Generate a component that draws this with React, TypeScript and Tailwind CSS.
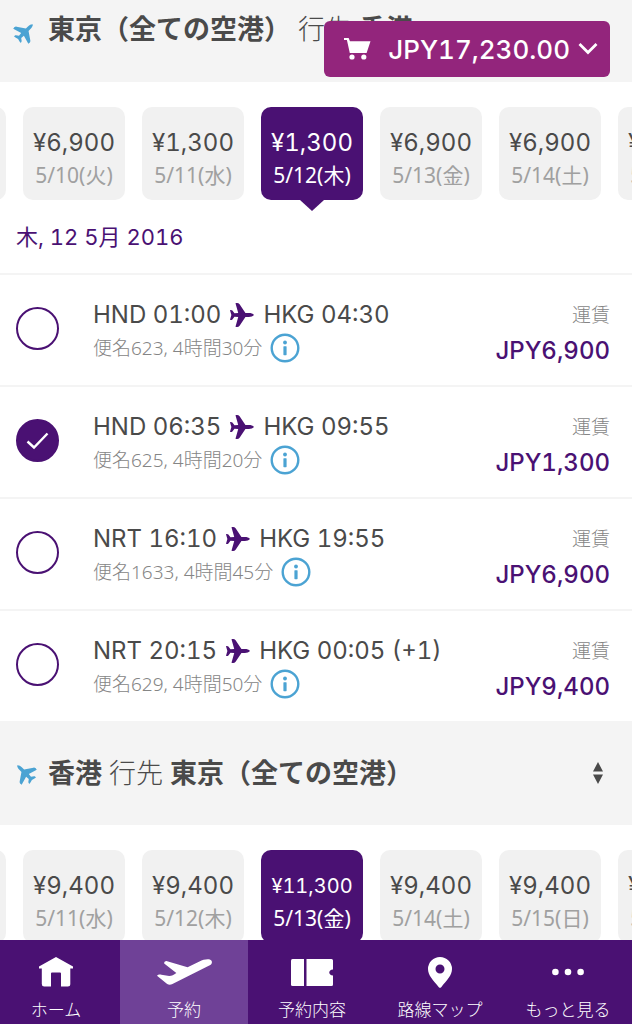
import React, { useState } from 'react';

const PRICE_FONT = "font-[Inter,'Noto_Sans_CJK_JP',sans-serif] tabular-nums";
const TEXT_FONT = "font-['Noto_Sans','Noto_Sans_CJK_JP',sans-serif]";

interface Fare {
  price: string;
  date: string;
}

interface Flight {
  id: string;
  from: string;
  to: string;
  detail: string;
  fare: string;
}

const OUTBOUND_FARES: Fare[] = [
  { price: '¥6,900', date: '5/9(月)' },
  { price: '¥6,900', date: '5/10(火)' },
  { price: '¥1,300', date: '5/11(水)' },
  { price: '¥1,300', date: '5/12(木)' },
  { price: '¥6,900', date: '5/13(金)' },
  { price: '¥6,900', date: '5/14(土)' },
  { price: '¥6,900', date: '5/15(日)' },
];

const RETURN_FARES: Fare[] = [
  { price: '¥9,400', date: '5/10(火)' },
  { price: '¥9,400', date: '5/11(水)' },
  { price: '¥9,400', date: '5/12(木)' },
  { price: '¥11,300', date: '5/13(金)' },
  { price: '¥9,400', date: '5/14(土)' },
  { price: '¥9,400', date: '5/15(日)' },
  { price: '¥9,400', date: '5/16(月)' },
];

const FLIGHTS: Flight[] = [
  { id: '623', from: 'HND 01:00', to: 'HKG 04:30', detail: '便名623, 4時間30分', fare: 'JPY6,900' },
  { id: '625', from: 'HND 06:35', to: 'HKG 09:55', detail: '便名625, 4時間20分', fare: 'JPY1,300' },
  { id: '1633', from: 'NRT 16:10', to: 'HKG 19:55', detail: '便名1633, 4時間45分', fare: 'JPY6,900' },
  { id: '629', from: 'NRT 20:15', to: 'HKG 00:05 (+1)', detail: '便名629, 4時間50分', fare: 'JPY9,400' },
];

// Plane pointing right, rotated by the caller
const Plane = ({ className }: { className: string }) => (
  <svg viewBox="0 0 70 70" className={className} fill="currentColor" aria-hidden="true">
    <path d="M70 35 C67 31 61 29.5 55 29.5 L45 29 L28 4 C25 0 21 -1 16 1 L24 29 L13 30 L7 22 C5 20 2 20 0 21 L4 35 L0 49 C2 50 5 50 7 48 L13 40 L24 41 L16 69 C21 71 25 70 28 66 L45 41 L55 40.5 C61 40.5 67 39 70 35 Z" />
  </svg>
);

const InfoIcon = () => (
  <svg viewBox="0 0 30 30" className="h-[30px] w-[30px]" aria-hidden="true">
    <circle cx="15" cy="15" r="13.3" fill="none" stroke="#4ba3d3" strokeWidth="2.4" />
    <circle cx="15" cy="9.5" r="1.9" fill="#4ba3d3" />
    <rect x="13.4" y="13.2" width="3.2" height="9" rx="0.6" fill="#4ba3d3" />
  </svg>
);

const CartIcon = () => (
  <svg viewBox="0 0 27 22" className="h-[22px] w-[27px]" fill="currentColor" aria-hidden="true">
    <path d="M0 0 H4.6 L6 3.2 H26.5 L22.6 15 H5.8 L2.9 2 H0 Z" />
    <circle cx="8" cy="19" r="2.6" />
    <circle cx="19.8" cy="19" r="2.6" />
  </svg>
);

const NAV_ITEMS = [
  {
    label: 'ホーム',
    icon: (
      <svg viewBox="0 0 34 30" className="h-[30px] w-[34px]" fill="currentColor" aria-hidden="true">
        <path d="M17 0 L34 9.5 V11.5 H31.3 V27 Q31.3 29.5 28.8 29.5 H22 V16.5 Q22 15.5 21 15.5 H13 Q12 15.5 12 16.5 V29.5 H5.2 Q2.8 29.5 2.8 27 V11.5 H0 V9.5 Z" />
      </svg>
    ),
  },
  {
    label: '予約',
    icon: (
      <svg viewBox="0 0 162 76" className="h-[26px] w-[55px]" fill="currentColor" aria-hidden="true">
        <path d="M160 4 C164 9 161 16 154 19 L44 74 C40 76 34 76 30 73 L0 49 C2 46 8 45 13 46 L36 50 C44 50 49 46 57 41 L22 14 C19 10 24 5 30 6 L90 24 L125 7 C138 0 155 -2 160 4 Z" />
      </svg>
    ),
  },
  {
    label: '予約内容',
    icon: (
      <svg viewBox="0 0 42 27" className="h-[27px] w-[42px]" fill="currentColor" aria-hidden="true">
        <path d="M1.5 0 H13 V27 H1.5 Q0 27 0 25.5 V1.5 Q0 0 1.5 0 Z" />
        <path d="M15.5 0 H40.5 Q42 0 42 1.5 V10.5 C37 10.5 37 16.5 42 16.5 V25.5 Q42 27 40.5 27 H15.5 Z" />
      </svg>
    ),
  },
  {
    label: '路線マップ',
    icon: (
      <svg viewBox="0 0 24 31" className="h-[31px] w-6" fill="currentColor" aria-hidden="true">
        <path
          fillRule="evenodd"
          d="M12 0 A12 12 0 0 1 24 12 C24 18.5 19 23 13.2 30.2 Q12 31.4 10.8 30.2 C5 23 0 18.5 0 12 A12 12 0 0 1 12 0 Z M12 7.5 A4.5 4.5 0 1 0 12 16.5 A4.5 4.5 0 1 0 12 7.5 Z"
        />
      </svg>
    ),
  },
  {
    label: 'もっと見る',
    icon: (
      <svg viewBox="0 0 32 8" className="h-2 w-8" fill="currentColor" aria-hidden="true">
        <circle cx="3.4" cy="4" r="3.3" />
        <circle cx="16" cy="4" r="3.3" />
        <circle cx="28.6" cy="4" r="3.3" />
      </svg>
    ),
  },
];

const FareStrip = ({ fares, label }: { fares: Fare[]; label: string }) => {
  const [selected, setSelected] = useState(3);

  return (
    <div className="overflow-hidden pt-[25px] pb-3" role="group" aria-label={label}>
      <div className="-ml-24 flex gap-[17px]">
        {fares.map((fare, i) => {
          const active = i === selected;
          const size = fare.price.length > 6 ? 'text-xl' : 'text-2xl';
          return (
            <button
              key={fare.date}
              type="button"
              aria-pressed={active}
              onClick={() => setSelected(i)}
              className={`relative flex h-[93px] w-[102px] shrink-0 flex-col items-center rounded-[10px] pt-5 whitespace-nowrap ${
                active ? 'bg-[#4a1173] text-white' : 'bg-[#f1f1f1] text-[#4a4a4a]'
              }`}
            >
              <span className={`${PRICE_FONT} ${size} leading-8`}>{fare.price}</span>
              <span className={`text-[21px] leading-8 ${active ? 'text-white' : 'text-[#a0a0a0]'}`}>
                {fare.date}
              </span>
              {active && (
                <svg viewBox="0 0 24 12" className="absolute top-full h-3 w-6" fill="#4a1173" aria-hidden="true">
                  <path d="M0 0 H24 L12 11 Z" />
                </svg>
              )}
            </button>
          );
        })}
      </div>
    </div>
  );
};

const FlightRow = ({ flight, checked, onSelect }: { flight: Flight; checked: boolean; onSelect: () => void }) => (
  <li className="flex h-28 items-start border-t-2 border-[#f4f4f4] pt-6 pr-[22px] pl-4">
    <span className="relative mt-2 flex">
      <input
        id={`flight-${flight.id}`}
        type="radio"
        name="flight"
        checked={checked}
        onChange={onSelect}
        className="h-[43px] w-[43px] appearance-none rounded-full border-2 border-[#4a1173] bg-white checked:bg-[#4a1173]"
      />
      {checked && (
        <svg viewBox="0 0 43 43" className="pointer-events-none absolute inset-0" fill="none" aria-hidden="true">
          <path d="M11.5 22.5 L18 28.5 L31.5 14.5" stroke="white" strokeWidth="2.4" />
        </svg>
      )}
    </span>
    <div className="ml-[34px] flex-1">
      <label
        htmlFor={`flight-${flight.id}`}
        className={`${PRICE_FONT} flex items-center gap-[9px] text-2xl leading-8 whitespace-nowrap text-[#4a4a4a]`}
      >
        {flight.from}
        <Plane className="h-6 w-6 text-[#4a1173]" />
        {flight.to}
      </label>
      <div className="flex items-center gap-2 text-[19px] leading-[34px] font-light whitespace-nowrap text-[#858585]">
        {flight.detail}
        <button type="button" aria-label="フライト情報">
          <InfoIcon />
        </button>
      </div>
    </div>
    <div className="text-right">
      <p className="text-[19px] leading-8 font-light text-[#858585]">運賃</p>
      <p className={`${PRICE_FONT} text-2xl leading-10 font-medium text-[#4a1173]`}>{flight.fare}</p>
    </div>
  </li>
);

export default function App() {
  const [flightId, setFlightId] = useState('625');
  const [tab, setTab] = useState('予約');

  return (
    <div className={`${TEXT_FONT} relative flex h-screen flex-col overflow-hidden bg-white`}>
      <button
        type="button"
        className={`${PRICE_FONT} absolute top-[21px] right-[22px] z-10 flex h-14 w-[286px] items-center justify-between rounded-md bg-[#93257c] pr-3 pl-5 text-[26px] font-medium text-white`}
      >
        <CartIcon />
        <span className="flex items-center gap-2">
          JPY17,230.00
          <svg viewBox="0 0 20 14" className="h-[14px] w-5" fill="none" aria-hidden="true">
            <path d="M1.5 2 L10 10.5 L18.5 2" stroke="white" strokeWidth="2.8" />
          </svg>
        </span>
      </button>

      <main className="min-h-0 flex-1 overflow-y-auto [scrollbar-width:none]">
        <header className="flex h-[82px] items-start bg-[#f4f4f4] px-[14px] pt-[9px]">
          <Plane className="mt-3 h-[22px] w-[22px] shrink-0 -rotate-45 text-[#4ba3d3]" />
          <h2 className="ml-3 text-[27px] leading-10 font-light whitespace-nowrap text-[#4a4a4a]">
            <b className="font-bold">東京（全ての空港）</b> 行先 <b className="font-bold">香港</b>
          </h2>
        </header>

        <FareStrip fares={OUTBOUND_FARES} label="往路の日付" />

        <p className={`${PRICE_FONT} px-4 pt-[9px] pb-5 text-[22px] leading-8 text-[#4a1173]`}>木, 12 5月 2016</p>

        <ul>
          {FLIGHTS.map((flight) => (
            <FlightRow
              key={flight.id}
              flight={flight}
              checked={flight.id === flightId}
              onSelect={() => setFlightId(flight.id)}
            />
          ))}
        </ul>

        <header className="flex h-[104px] items-center bg-[#f4f4f4] pr-7 pl-[14px]">
          <Plane className="h-[22px] w-[22px] shrink-0 -rotate-135 text-[#4ba3d3]" />
          <h2 className="ml-3 flex-1 text-[27px] leading-10 font-light whitespace-nowrap text-[#4a4a4a]">
            <b className="font-bold">香港</b> 行先 <b className="font-bold">東京（全ての空港）</b>
          </h2>
          <button type="button" aria-label="並べ替え">
            <svg viewBox="0 0 12 24" className="h-6 w-3" fill="#4a4a4a" aria-hidden="true">
              <path d="M6 1 L11 10.5 H1 Z M1 13.5 H11 L6 23 Z" />
            </svg>
          </button>
        </header>

        <FareStrip fares={RETURN_FARES} label="復路の日付" />
      </main>

      <nav className="-ml-2 grid h-[84px] shrink-0 grid-cols-5 bg-[#4a1173] text-white">
        {NAV_ITEMS.map((item) => (
          <a
            key={item.label}
            href="#"
            onClick={() => setTab(item.label)}
            className={`flex flex-col items-center pt-4 ${tab === item.label ? 'bg-[#6f4197]' : ''}`}
          >
            <span className="flex h-8 items-center">{item.icon}</span>
            <span className="mt-2 text-[17px] leading-7 font-light whitespace-nowrap">{item.label}</span>
          </a>
        ))}
      </nav>
    </div>
  );
}
